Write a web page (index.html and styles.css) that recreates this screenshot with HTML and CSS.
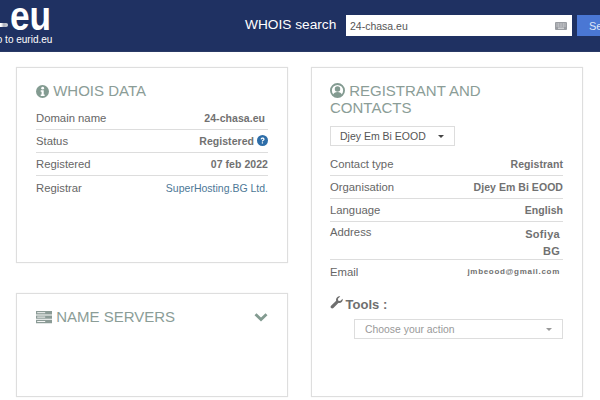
FILE: index.html
```html
<!DOCTYPE html>
<html lang="en">
<head>
    <meta charset="UTF-8">
    <meta name="viewport" content="width=device-width, initial-scale=1.0">
    <title>WHOIS 24-chasa.eu</title>
    <link rel="stylesheet" href="styles.css">
</head>
<body>
    <header class="topbar">
        <a class="logo" href="#">
            <span class="logoMark"><span class="logoDots"></span><span class="logoText">eu</span></span>
            <span class="logoLink">Go to eurid.eu</span>
        </a>
        <div class="searchLabel">WHOIS search</div>
        <div class="searchBox">
            <span>24-chasa.eu</span>
            <svg class="keyboardIcon" viewBox="0 0 12 8" width="12" height="8">
                <rect width="12" height="8" rx="1" fill="#9a9da2"/>
                <path d="M1.500 2h9M1.500 4h9" stroke="#e4e5e7" stroke-width="1" stroke-dasharray="1 .6"/>
                <path d="M3 6.200h6" stroke="#e4e5e7" stroke-width="1"/>
            </svg>
        </div>
        <button class="searchButton">Search</button>
    </header>

    <main class="content">
        <div class="leftColumn">
            <section class="card whoisCard">
                <h2 class="cardTitle">
                    <svg class="titleIcon" viewBox="0 0 16 16" width="13" height="13">
                        <circle cx="8" cy="8" r="8" fill="#839b91"/>
                        <circle cx="8.200" cy="3.900" r="1.700" fill="#fff"/>
                        <path d="M5.800 6.600h3.700v5.200h1.100v1.600H5.800v-1.600h1.100V8.200H5.800z" fill="#fff"/>
                    </svg>
                    WHOIS DATA
                </h2>
                <div class="row"><span class="rowLabel">Domain name</span><span class="rowValue domainValue">24-chasa.eu</span></div>
                <div class="row">
                    <span class="rowLabel">Status</span>
                    <span class="rowValue">Registered
                        <svg class="helpIcon" viewBox="0 0 16 16" width="11" height="11">
                            <circle cx="8" cy="8" r="8" fill="#2d6da8"/>
                            <path d="M5.200 6.200C5.400 4.600 6.600 3.800 8.100 3.800c1.700 0 2.900 1 2.900 2.400 0 1.200-.8 1.800-1.600 2.300-.5.3-.7.6-.7 1.100H7c0-1.100.4-1.700 1.200-2.200.6-.4 1-.7 1-1.100 0-.5-.5-.9-1.100-.9-.7 0-1.100.4-1.300 1z" fill="#fff"/>
                            <rect x="7" y="10.600" width="1.800" height="1.800" fill="#fff"/>
                        </svg>
                    </span>
                </div>
                <div class="row"><span class="rowLabel">Registered</span><span class="rowValue">07 feb 2022</span></div>
                <div class="row"><span class="rowLabel">Registrar</span><a class="rowLink" href="#">SuperHosting.BG Ltd.</a></div>
            </section>

            <section class="card serversCard">
                <h2 class="cardTitle serversTitle">
                    <span>
                        <svg class="titleIcon" viewBox="0 0 16 14" width="16" height="14">
                            <path d="M0 1h16v3.400H0zM0 5.400h16v3.400H0zM0 9.800h16v3.400H0z" fill="#8b9b96"/>
                            <path d="M1.200 2.700h8M1.200 7.100h8M1.200 11.500h8" stroke="#fff" stroke-width=".9"/>
                        </svg>
                        NAME SERVERS
                    </span>
                    <svg class="chevron" viewBox="0 0 14 10" width="14" height="10">
                        <path d="M1.500 2.200 7 7.600l5.500-5.400" fill="none" stroke="#839b91" stroke-width="2.800"/>
                    </svg>
                </h2>
            </section>
        </div>

        <section class="card contactCard">
            <h2 class="cardTitle">
                <svg class="titleIcon" viewBox="0 0 16 16" width="15" height="15">
                    <circle cx="8" cy="8" r="7" fill="none" stroke="#839b91" stroke-width="2"/>
                    <circle cx="8" cy="6.300" r="2.900" fill="#839b91"/>
                    <path d="M3 13c.8-2.400 2.600-3.400 5-3.400s4.200 1 5 3.400c-1.400 1.300-3.100 2-5 2s-3.600-.7-5-2z" fill="#839b91"/>
                </svg>
                REGISTRANT AND CONTACTS
            </h2>
            <div class="contactSelect">Djey Em Bi EOOD<span class="caret"></span></div>
            <div class="row"><span class="rowLabel">Contact type</span><span class="rowValue">Registrant</span></div>
            <div class="row"><span class="rowLabel">Organisation</span><span class="rowValue">Djey Em Bi EOOD</span></div>
            <div class="row"><span class="rowLabel">Language</span><span class="rowValue">English</span></div>
            <div class="row addressRow">
                <span class="rowLabel">Address</span>
                <span class="rowValue addressValue"><span>Sofiya</span><span>BG</span></span>
            </div>
            <div class="row emailRow"><span class="rowLabel">Email</span><span class="rowValue emailValue">jmbeood@gmail.com</span></div>
            <div class="toolsTitle">
                <svg class="toolsIcon" viewBox="0 0 16 16" width="13" height="13">
                    <path d="M15.600 3.500c.3 1.500-.1 3-1.200 4-1.100 1.100-2.700 1.400-4.100 1L4.200 14.900c-.8.8-2.100.8-2.900 0s-.8-2.100 0-2.900l6.300-6.200c-.4-1.400-.1-3 1-4.100 1-1.100 2.500-1.500 4-1.200L9.700 3.400l.5 2.300 2.300.5z" fill="#6f6f6f"/>
                </svg>
                Tools :
            </div>
            <div class="actionSelect">Choose your action<span class="caret caretLight"></span></div>
        </section>
    </main>
</body>
</html>
```

FILE: styles.css
```css
* {
    box-sizing: border-box;
}

html,
body {
    height: 400px;
    overflow: hidden;
}

body {
    margin: 0;
    background-color: #fff;
    font-family: "Liberation Sans", Arial, sans-serif;
    color: #666;
}

.topbar {
    display: flex;
    align-items: flex-start;
    height: 52px;
    background-color: #1f3162;
    border-bottom: 1px solid #2a3a66;
    color: #fff;
    overflow: hidden;
}

.logo {
    display: flex;
    flex-direction: column;
    flex: none;
    width: 265px;
    margin-left: -20px;
    color: #fff;
    text-decoration: none;
}

.logoMark {
    display: flex;
    align-items: flex-end;
    height: 33px;
}

.logoDots {
    flex: none;
    width: 28px;
    height: 4px;
    margin: 0 2px 6px 0;
    border-radius: 2px;
    background: linear-gradient(to right, #fff 0 75%, #a9adba 85%, #d5d8de 100%);
}

.logoText {
    flex: none;
    height: 33px;
    font-size: 41px;
    font-weight: bold;
    line-height: 33px;
    transform: scaleX(0.86);
    transform-origin: left center;
}

.logoLink {
    margin-left: 9px;
    font-size: 10px;
    line-height: 13px;
}

.searchLabel {
    flex: none;
    width: 101px;
    margin-top: 15px;
    font-size: 13.7px;
    line-height: 20px;
}

.searchBox {
    display: flex;
    align-items: center;
    justify-content: space-between;
    flex: none;
    width: 226px;
    height: 21px;
    margin-top: 15px;
    padding: 0 5px 0 4px;
    background-color: #fff;
    color: #555;
    font-size: 10.5px;
}

.searchButton {
    flex: none;
    width: 70px;
    height: 21px;
    margin: 15px 0 0 5px;
    padding: 0 0 0 12px;
    border: none;
    background-color: #4a77d4;
    color: #dfe6f6;
    font-family: inherit;
    font-size: 11px;
    text-align: left;
}

.content {
    display: flex;
    gap: 23px;
    padding: 15px 0 0 16px;
}

.leftColumn {
    display: flex;
    flex-direction: column;
    gap: 30px;
    width: 272px;
}

.card {
    border: 1px solid #dedede;
    box-shadow: 0 0 1px #e6e6e6;
    background-color: #fff;
}

.whoisCard {
    height: 196px;
    padding: 14px 19px;
}

.serversCard {
    height: 104px;
    padding: 14px 19px;
}

.contactCard {
    width: 272px;
    height: 330px;
    padding: 14px 19px 14px 18px;
}

.cardTitle {
    margin: 0 0 8px;
    color: #8b9d97;
    font-size: 15px;
    font-weight: normal;
    line-height: 17px;
}

.serversTitle {
    display: flex;
    align-items: center;
    justify-content: space-between;
}

.titleIcon {
    vertical-align: -2px;
}

.row {
    display: flex;
    align-items: center;
    justify-content: space-between;
    height: 23px;
    border-bottom: 1px solid #ddd;
    font-size: 11.3px;
}

.row:last-child {
    border-bottom: none;
}

.rowValue {
    color: #717171;
    font-size: 10.5px;
    font-weight: bold;
    letter-spacing: 0.05px;
}

.domainValue {
    padding-right: 3px;
}

.rowLink {
    color: #4d7796;
    font-size: 10.5px;
    text-decoration: none;
}

.helpIcon {
    vertical-align: -1px;
}

.contactSelect {
    display: flex;
    align-items: center;
    width: 125px;
    height: 20px;
    margin: 10px 0 7px;
    padding-left: 9px;
    border: 1px solid #ddd;
    color: #555;
    font-size: 10.5px;
}

.caret {
    margin-left: 12px;
    border-top: 3px solid #444;
    border-left: 3px solid transparent;
    border-right: 3px solid transparent;
}

.caretLight {
    margin-left: auto;
    border-top-color: #999;
}

.addressRow {
    align-items: flex-start;
    height: 38px;
    padding-top: 4px;
}

.addressValue {
    display: flex;
    flex-direction: column;
    align-items: flex-end;
    padding-right: 3px;
    font-size: 11px;
    letter-spacing: 0.3px;
    line-height: 17px;
}

.emailRow {
    border-bottom: none;
}

.emailValue {
    padding-right: 3px;
    font-size: 8px;
    letter-spacing: 0.7px;
}

.toolsTitle {
    margin-top: 13px;
    color: #6f6f6f;
    font-size: 13px;
    font-weight: bold;
    line-height: 16px;
}

.toolsIcon {
    margin-right: -1px;
}

.actionSelect {
    display: flex;
    align-items: center;
    height: 20px;
    margin: 6px 0 0 24px;
    padding: 0 10px;
    border: 1px solid #ddd;
    color: #999;
    font-size: 10.4px;
}
```
